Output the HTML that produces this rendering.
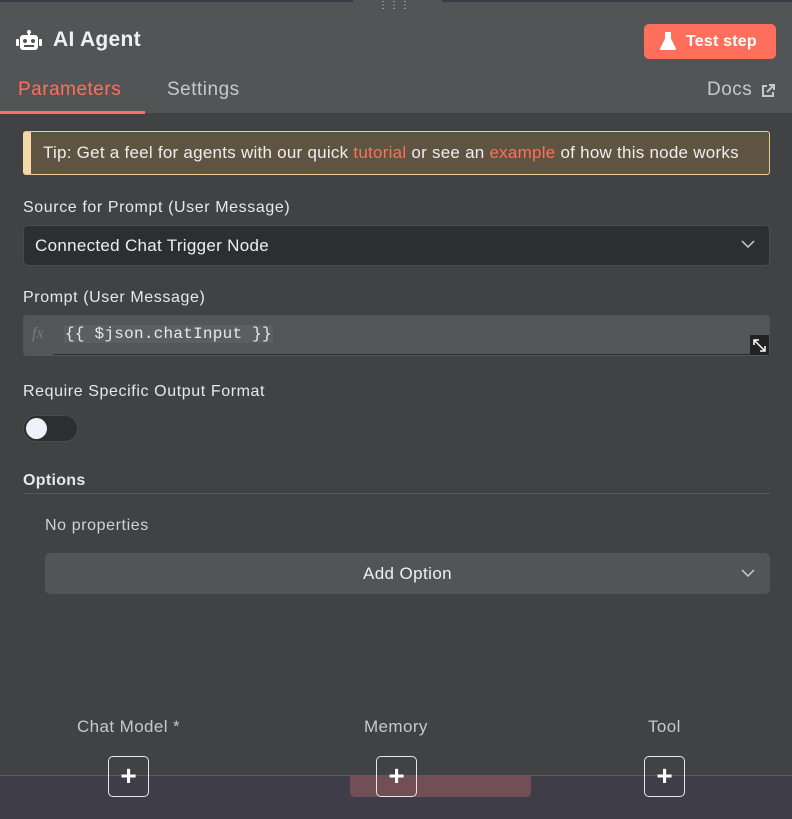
<!DOCTYPE html>
<html><head><meta charset="utf-8"><style>
*{box-sizing:border-box;margin:0;padding:0}
body{width:792px;height:819px;overflow:hidden;background:#414244;font-family:"Liberation Sans",sans-serif;position:relative;color:#e6e6e8}
.abs{position:absolute}
.hdr{left:0;top:0;width:792px;height:113px;background:#535456}
.topline{left:0;top:0;width:353px;height:2px;background:#3a3b44}
.topline2{left:442px;top:0;width:350px;height:2px;background:#3a3b44}
.title{left:53px;top:28px;font-size:21px;font-weight:bold;color:#f0f0f2;letter-spacing:0.3px}
.btn{left:644px;top:24px;width:132px;height:35px;background:#ff6f5c;border-radius:5px;color:#fff;font-weight:bold;font-size:16px;line-height:35px;padding-left:42px;letter-spacing:0.2px}
.tab{top:79px;font-size:19px;letter-spacing:0.5px}
.ul{left:0;top:111px;width:145px;height:3px;background:#ff6f5c}
.tip{left:23px;top:131px;width:747px;height:44px;background:#5f5341;border:1px solid #e8cd98;border-left:8px solid #f4d9a6;border-radius:3px;font-size:17px;letter-spacing:0.25px;line-height:42px;padding-left:12px;color:#eee;white-space:nowrap}
.tip b{color:#ff6f5c;font-weight:normal}
.lbl{left:23px;font-size:16px;letter-spacing:0.6px;color:#e8e8ea}
.sel{left:23px;top:225px;width:747px;height:41px;background:#2d2e30;border:1px solid #4a4b4d;border-radius:5px;font-size:17px;letter-spacing:0.3px;line-height:39px;padding-left:11px;color:#eee}
.expr{left:23px;top:315px;width:747px;height:41px;background:#545557;border-radius:4px}
.tog{left:23px;top:415px;width:55px;height:27px;background:#2d2e30;border:1px solid #4a4b4d;border-radius:14px}
.knob{left:2px;top:2px;width:21px;height:21px;border-radius:50%;background:#f0f0f8}
.plus{width:41px;height:41px;border:1px solid #e6e6e8;border-radius:5px;top:756px;color:#fff;font-size:28px;text-align:center;line-height:38px;font-weight:bold}
.bl{top:717px;font-size:17px;letter-spacing:0.4px;color:#c4c8d0}
</style></head><body>
<div class="abs hdr"></div>
<div class="abs topline"></div><div class="abs topline2"></div>
<div class="abs" style="left:378px;top:0;font-size:10px;color:#ccc;letter-spacing:1px">⋮⋮⋮</div>
<svg class="abs" style="left:16px;top:30px" width="26" height="22" viewBox="0 0 26 22"><rect x="12" y="0" width="2" height="5" fill="#fff"/><circle cx="13" cy="2" r="2" fill="#fff"/><rect x="4" y="5" width="18" height="15" rx="3" fill="#fff"/><rect x="0" y="9" width="3" height="7" rx="1" fill="#fff"/><rect x="23" y="9" width="3" height="7" rx="1" fill="#fff"/><circle cx="9" cy="11" r="2" fill="#535456"/><circle cx="17" cy="11" r="2" fill="#535456"/><rect x="8" y="15" width="10" height="2" fill="#535456"/></svg>
<div class="abs title">AI Agent</div>
<div class="abs btn">Test step</div>
<svg class="abs" style="left:660px;top:32px" width="16" height="19" viewBox="0 0 16 19"><path d="M5 1h6M6 1v6L1 17h14L10 7V1" fill="#fff" stroke="#fff" stroke-width="2" stroke-linejoin="round"/></svg>
<div class="abs tab" style="left:18px;color:#ff6f5c">Parameters</div>
<div class="abs tab" style="left:167px;color:#c4c8d0">Settings</div>
<div class="abs tab" style="left:707px;color:#c4c8d0">Docs</div>
<svg class="abs" style="left:761px;top:84px" width="14" height="14" viewBox="0 0 14 14" fill="none" stroke="#c4c8d0" stroke-width="2"><path d="M6 2H2v10h10V8M8 1h5v5M13 1L6 8"/></svg>
<div class="abs ul"></div>
<div class="abs tip">Tip: Get a feel for agents with our quick <b>tutorial</b> or see an <b>example</b> of how this node works</div>
<div class="abs lbl" style="top:199px">Source for Prompt (User Message)</div>
<div class="abs sel">Connected Chat Trigger Node</div>
<svg class="abs" style="left:741px;top:240px" width="14" height="9" viewBox="0 0 14 9"><path d="M1 1l6 6 6-6" fill="none" stroke="#ccc" stroke-width="1.5"/></svg>
<div class="abs lbl" style="top:289px">Prompt (User Message)</div>
<div class="abs expr"></div>
<div class="abs" style="left:53px;top:354px;width:697px;height:1px;background:#2d2e30"></div>
<div class="abs" style="left:32px;top:325px;font-family:'Liberation Serif',serif;font-style:italic;color:#7a7c80;font-size:16px">fx</div>
<div class="abs" style="left:64px;top:325px;font-family:'Liberation Mono',monospace;font-size:16px;letter-spacing:0.25px;color:#e8e8ea;background:#5d5e60;padding:0 1px">{{ $json.chatInput }}</div>
<div class="abs" style="left:750px;top:335px;width:19px;height:20px;background:#222;"></div>
<svg class="abs" style="left:753px;top:339px" width="13" height="13" viewBox="0 0 13 13" fill="none" stroke="#fff" stroke-width="1.5"><path d="M1 6V1h5M12 7v5H7M2 2l9 9"/></svg>
<div class="abs lbl" style="top:383px">Require Specific Output Format</div>
<div class="abs tog"><div class="abs knob"></div></div>
<div class="abs lbl" style="top:472px;font-weight:bold;letter-spacing:0.3px">Options</div>
<div class="abs" style="left:23px;top:493px;width:747px;height:1px;background:#57585a"></div>
<div class="abs lbl" style="left:45px;top:517px;color:#d0d2d6">No properties</div>
<div class="abs" style="left:45px;top:553px;width:725px;height:41px;background:#535456;border-radius:5px;text-align:center;line-height:41px;font-size:17px;letter-spacing:0.4px;color:#f0f0f2">Add Option</div>
<svg class="abs" style="left:741px;top:569px" width="14" height="9" viewBox="0 0 14 9"><path d="M1 1l6 6 6-6" fill="none" stroke="#ccc" stroke-width="1.5"/></svg>
<div class="abs" style="left:0;top:775px;width:792px;height:44px;background:#3f3e48;border-top:1px solid #5a5a62"></div>
<div class="abs" style="left:350px;top:776px;width:181px;height:21px;background:#724f57;border-radius:0 0 5px 5px"></div>
<div class="abs bl" style="left:77px">Chat Model *</div>
<div class="abs bl" style="left:364px">Memory</div>
<div class="abs bl" style="left:648px">Tool</div>
<div class="abs plus" style="left:108px">+</div>
<div class="abs plus" style="left:376px">+</div>
<div class="abs plus" style="left:644px">+</div>
</body></html>
